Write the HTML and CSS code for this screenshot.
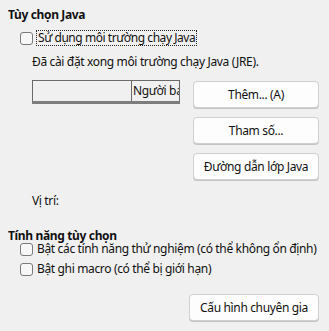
FILE: index.html
```html
<!DOCTYPE html>
<html lang="vi">
<head>
<meta charset="utf-8">
<link rel="stylesheet" href="styles.css">
</head>
<body>
<div class="page">
  <div class="title">Tùy chọn Java</div>
  <label class="check-row first">
    <span class="box"></span>
    <span class="label focus">Sử dụng môi trường chạy Java</span>
  </label>
  <div class="info">Đã cài đặt xong môi trường chạy Java (JRE).</div>
  <div class="java-area">
    <div class="left-col">
      <div class="table">
        <div class="head">
          <div class="cell c1"></div>
          <div class="cell c2">Người bán</div>
        </div>
        <div class="bar"></div>
      </div>
      <div class="location">Vị trí:</div>
    </div>
    <div class="buttons">
      <button class="btn">Thêm... (A)</button>
      <button class="btn">Tham số...</button>
      <button class="btn">Đường dẫn lớp Java</button>
    </div>
  </div>
  <div class="title second">Tính năng tùy chọn</div>
  <label class="check-row r2">
    <span class="box"></span>
    <span class="label">Bật các tính năng thử nghiệm (có thể không ổn định)</span>
  </label>
  <label class="check-row r3">
    <span class="box"></span>
    <span class="label">Bật ghi macro (có thể bị giới hạn)</span>
  </label>
  <div class="expert-row">
    <button class="btn expert">Cấu hình chuyên gia</button>
  </div>
</div>
</body>
</html>
```
FILE: styles.css
```css
html, body {
  margin: 0;
  padding: 0;
  background: #f0f0f0;
}
body {
  font-family: "Noto Sans", "Open Sans", sans-serif;
  font-size: 12px;
  line-height: 16px;
  letter-spacing: -0.35px;
  color: #111;
  width: 329px;
  height: 331px;
  overflow: hidden;
}
.page {
  padding: 7px 10px 0 8px;
}
.title {
  font-weight: 700;
  height: 16px;
}
.title.second {
  margin-top: 22px;
  height: 10px;
  line-height: 10px;
}
.check-row {
  display: flex;
  align-items: center;
  height: 16px;
  margin-left: 12px;
}
.check-row.first {
  margin-top: 7px;
}
.check-row.r2 {
  margin-top: 0;
}
.check-row.r3 {
  margin-top: 4px;
}
.box {
  width: 11px;
  height: 11px;
  border: 1px solid #7a7a7a;
  border-radius: 3px;
  background: #f7f7f7;
  flex: none;
  margin-right: 3px;
}
.label {
  white-space: nowrap;
  padding: 0 1px;
}
.label.focus {
  border: 1px dotted #222;
  height: 14px;
  line-height: 14px;
  padding: 0 1px;
  letter-spacing: -0.45px;
}
.info {
  margin-top: 8px;
  margin-left: 24px;
  height: 16px;
}
.java-area {
  display: flex;
  margin-top: 10px;
}
.left-col {
  margin-left: 24px;
  width: 147px;
}
.table {
  width: 148px;
}
.head {
  display: flex;
  height: 20px;
  border: 1px solid #6a6a6a;
  border-bottom: none;
  overflow: hidden;
}
.cell {
  height: 20px;
  line-height: 20px;
  white-space: nowrap;
  overflow: hidden;
}
.c1 {
  width: 98px;
  border-right: 1px solid #6a6a6a;
  flex: none;
}
.c2 {
  padding-left: 1px;
  flex: 1;
}
.bar {
  height: 3px;
  background: #7d7d7d;
}
.location {
  margin-top: 89px;
  height: 16px;
}
.buttons {
  margin-left: auto;
  width: 126px;
  padding-top: 1px;
  display: flex;
  flex-direction: column;
  gap: 9px;
}
.btn {
  font-family: inherit;
  font-size: 12px;
  letter-spacing: inherit;
  color: #111;
  height: 27px;
  width: 126px;
  background: #fdfdfd;
  border: 1px solid #d0d0d0;
  border-radius: 4px;
  padding: 0;
  box-shadow: 0 1px 0 #c4c4c4;
}
.expert-row {
  display: flex;
  justify-content: flex-end;
  margin-top: 17px;
}
.btn.expert {
  width: 130px;
}
```
